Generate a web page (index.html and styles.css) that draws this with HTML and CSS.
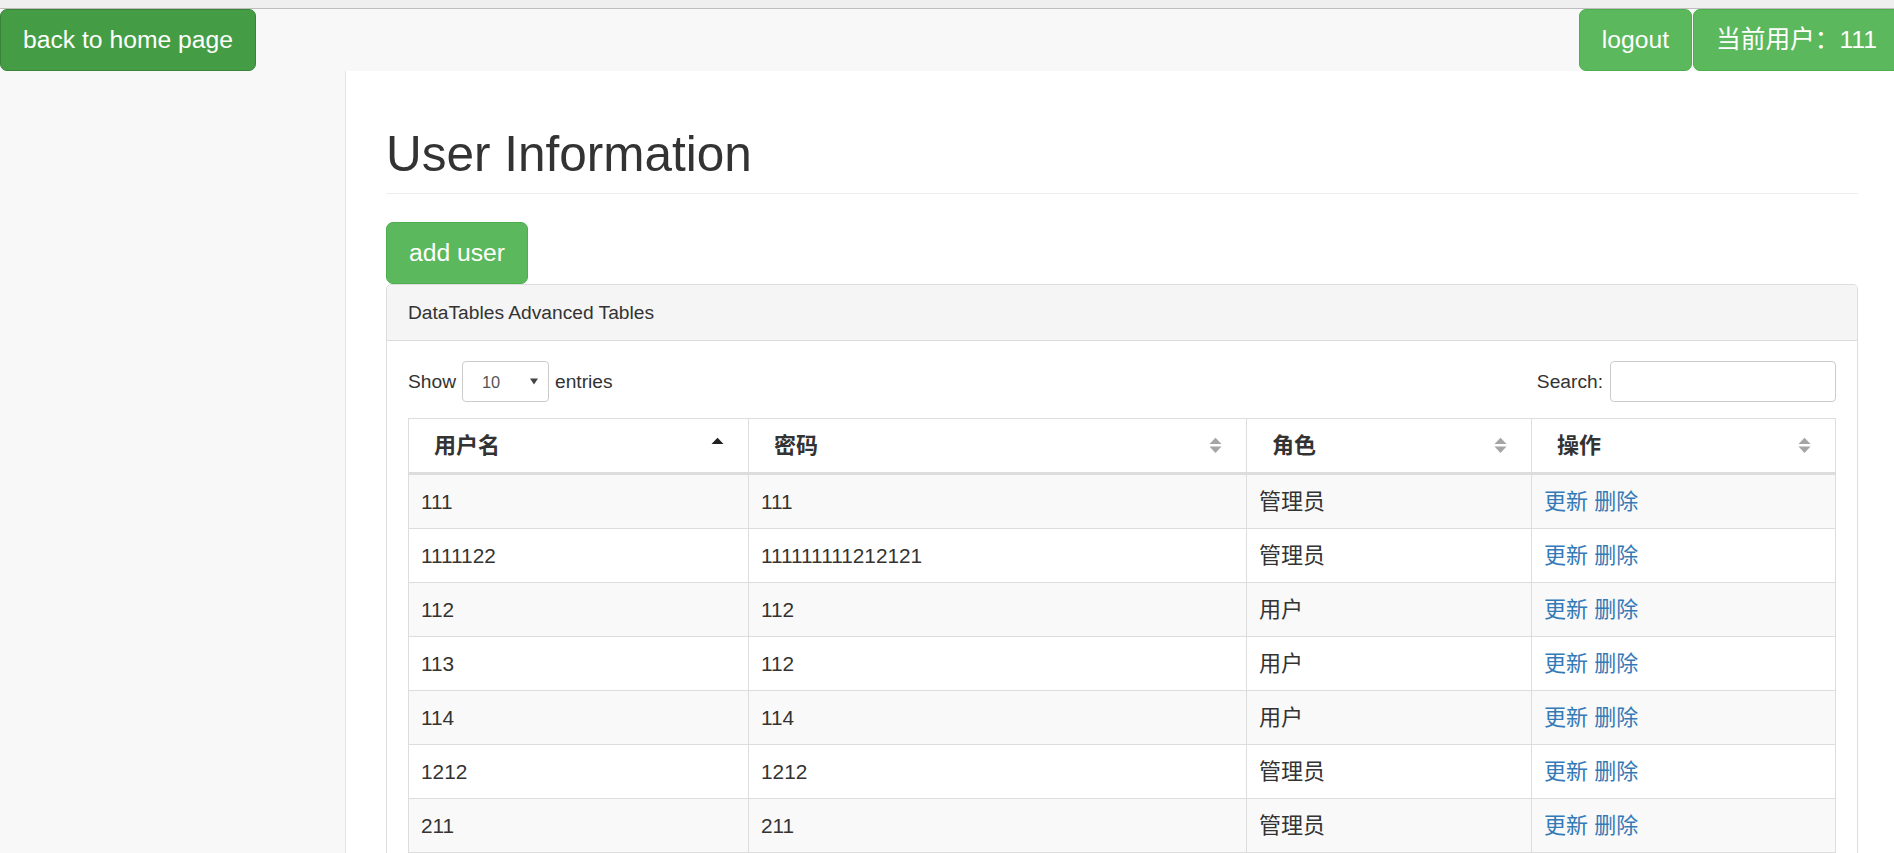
FILE: index.html
```html
<!DOCTYPE html>
<html lang="zh-CN">
<head>
<meta charset="utf-8">
<title>User Information</title>
<link rel="stylesheet" href="styles.css">
</head>
<body>
<div class="topstrip"></div>
<nav class="navbar">
  <a class="btn btn-lg btn-success-active" href="#">back to home page</a>
  <div class="nav-right">
    <a class="btn btn-lg btn-success" href="#">logout</a>
    <a class="btn btn-lg btn-success" href="#">当前用户：111</a>
  </div>
</nav>
<div class="layout">
  <aside class="sidebar"></aside>
  <main class="page">
    <h1 class="page-header">User Information</h1>
    <a class="btn btn-lg btn-success" href="#">add user</a>
    <section class="panel">
      <div class="panel-heading">DataTables Advanced Tables</div>
      <div class="panel-body">
        <div class="dt-top">
          <div class="dt-length">
            <span>Show</span>
            <span class="select">
              <span class="select-val">10</span>
              <svg class="select-arrow" width="8" height="7" viewBox="0 0 8 7"><path d="M0 0.5h8L4 6.5z" fill="#444"/></svg>
            </span>
            <span>entries</span>
          </div>
          <label class="dt-filter">Search:<span class="search-input"></span></label>
        </div>
        <table class="dtable">
          <colgroup><col class="c1"><col class="c2"><col class="c3"><col class="c4"></colgroup>
          <thead>
            <tr>
              <th>用户名<svg class="sort" width="13" height="17" viewBox="0 0 13 17"><path d="M0.5 7L6.5 0.8L12.5 7z" fill="#222"/></svg></th>
              <th>密码<svg class="sort" width="13" height="17" viewBox="0 0 13 17"><path d="M0.5 7L6.5 0.8L12.5 7z" fill="#a5a5a5"/><path d="M0.5 9.5H12.5L6.5 16z" fill="#a5a5a5"/></svg></th>
              <th>角色<svg class="sort" width="13" height="17" viewBox="0 0 13 17"><path d="M0.5 7L6.5 0.8L12.5 7z" fill="#a5a5a5"/><path d="M0.5 9.5H12.5L6.5 16z" fill="#a5a5a5"/></svg></th>
              <th>操作<svg class="sort" width="13" height="17" viewBox="0 0 13 17"><path d="M0.5 7L6.5 0.8L12.5 7z" fill="#a5a5a5"/><path d="M0.5 9.5H12.5L6.5 16z" fill="#a5a5a5"/></svg></th>
            </tr>
          </thead>
          <tbody>
            <tr><td>111</td><td>111</td><td class="zh">管理员</td><td class="zh"><a href="#">更新</a> <a href="#">删除</a></td></tr>
            <tr><td>1111122</td><td>111111111212121</td><td class="zh">管理员</td><td class="zh"><a href="#">更新</a> <a href="#">删除</a></td></tr>
            <tr><td>112</td><td>112</td><td class="zh">用户</td><td class="zh"><a href="#">更新</a> <a href="#">删除</a></td></tr>
            <tr><td>113</td><td>112</td><td class="zh">用户</td><td class="zh"><a href="#">更新</a> <a href="#">删除</a></td></tr>
            <tr><td>114</td><td>114</td><td class="zh">用户</td><td class="zh"><a href="#">更新</a> <a href="#">删除</a></td></tr>
            <tr><td>1212</td><td>1212</td><td class="zh">管理员</td><td class="zh"><a href="#">更新</a> <a href="#">删除</a></td></tr>
            <tr><td>211</td><td>211</td><td class="zh">管理员</td><td class="zh"><a href="#">更新</a> <a href="#">删除</a></td></tr>
          </tbody>
        </table>
      </div>
    </section>
  </main>
</div>
</body>
</html>
```
FILE: styles.css
```css
* { box-sizing: border-box; }
html, body {
  margin: 0;
  height: 100%;
  overflow: hidden;
}
body {
  font-family: "Liberation Sans", "Noto Sans CJK SC", sans-serif;
  font-size: 19.2px;
  line-height: 27px;
  color: #333;
  background: #f8f8f8;
}
a { text-decoration: none; }

.topstrip {
  height: 9px;
  background: #efefef;
  border-bottom: 1px solid #bdbdbd;
}

.navbar {
  display: flex;
  justify-content: space-between;
  align-items: stretch;
  height: 62px;
  background: #f8f8f8;
}
.nav-right {
  display: flex;
  gap: 1px;
  margin-right: -6px;
}

.btn {
  display: inline-block;
  color: #fff;
  font-size: 24.7px;
  line-height: 34px;
  padding: 13px 22px;
  border: 1px solid transparent;
  border-radius: 7px;
  white-space: nowrap;
}
.btn-success { background: #5cb85c; border-color: #4cae4c; }
.btn-success-active { background: #449d44; border-color: #398439; }

.layout {
  display: grid;
  grid-template-columns: 345px 1fr;
  height: calc(100% - 71px);
}
.sidebar { background: #f8f8f8; }
.page {
  background: #fff;
  border-left: 1px solid #e7e7e7;
  padding: 0 36px 0 40px;
  overflow: hidden;
}

.page-header {
  margin: 55px 0 28px;
  padding-bottom: 12px;
  border-bottom: 1px solid #eee;
  font-size: 49.5px;
  line-height: 55px;
  font-weight: 400;
  color: #333;
}

.panel {
  border: 1px solid #ddd;
  border-radius: 5px;
  background: #fff;
}
.panel-heading {
  background: #f5f5f5;
  border-bottom: 1px solid #ddd;
  padding: 14px 21px;
  line-height: 27px;
  border-radius: 5px 5px 0 0;
}
.panel-body {
  padding: 20px 21px;
}

.dt-top {
  display: flex;
  justify-content: space-between;
  align-items: center;
  height: 41px;
}
.dt-length {
  display: flex;
  align-items: center;
}
.select {
  position: relative;
  display: inline-flex;
  align-items: center;
  width: 87px;
  height: 41px;
  margin: 0 6px;
  padding: 2px 0 0 19px;
  border: 1px solid #ccc;
  border-radius: 4px;
  font-size: 16.4px;
  color: #555;
}
.select-arrow {
  position: absolute;
  right: 10px;
  top: 16px;
}
.dt-filter {
  display: flex;
  align-items: center;
  gap: 7px;
}
.search-input {
  display: block;
  width: 226px;
  height: 41px;
  border: 1px solid #ccc;
  border-radius: 4px;
  background: #fff;
}

.dtable {
  width: 100%;
  margin-top: 16px;
  border-collapse: collapse;
  table-layout: fixed;
}
.c1 { width: 340px; }
.c2 { width: 498px; }
.c3 { width: 285px; }
.dtable th,
.dtable td {
  border: 1px solid #ddd;
  padding: 13px 12px;
  line-height: 27px;
  text-align: left;
  white-space: nowrap;
}
.dtable td { font-size: 20.8px; }
.dtable th {
  position: relative;
  padding-left: 25px;
  font-size: 22px;
  font-weight: 700;
  color: #333;
  border-bottom: 3px solid #ddd;
  background: #fff;
}
.dtable td.zh { font-size: 22px; }
.dtable td a { color: #337ab7; }
.dtable tbody tr:nth-child(odd) td { background: #f9f9f9; }
.dtable tbody tr:nth-child(even) td { background: #fff; }
.sort {
  position: absolute;
  right: 24px;
  top: 50%;
  margin-top: -9px;
}
```
